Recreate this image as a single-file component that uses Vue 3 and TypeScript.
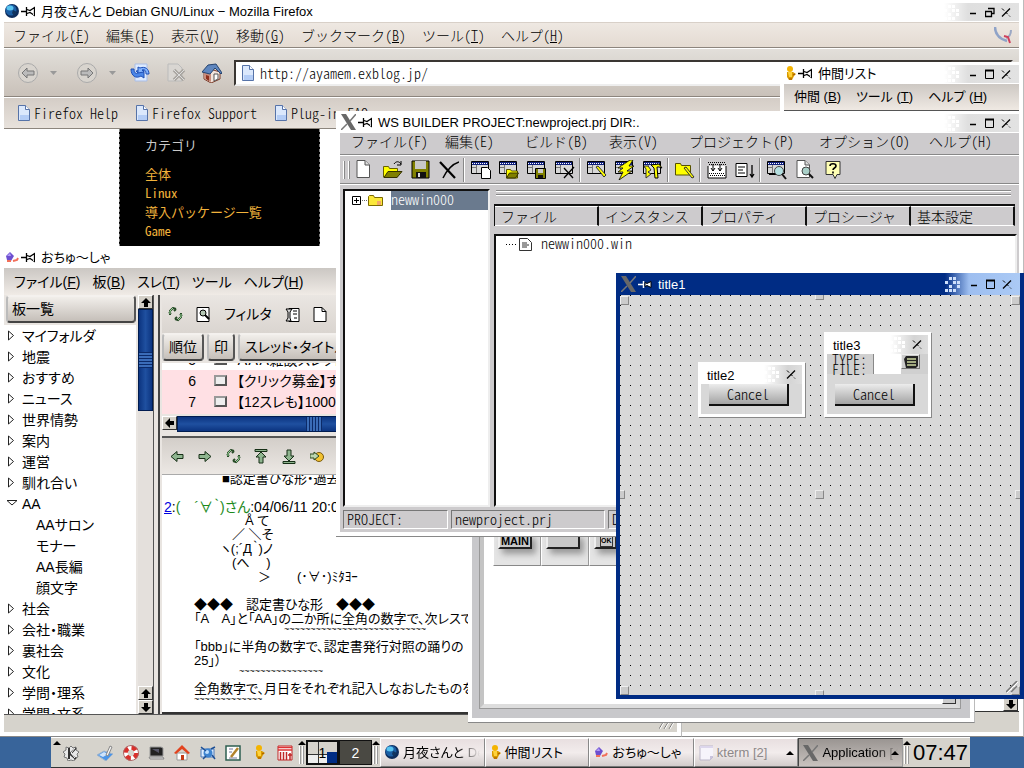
<script setup lang="ts">
import { h, ref } from 'vue'
import type { FunctionalComponent } from 'vue'

const doc = '<path d="M2 .5h8l4.500 4.500V17.500H2z" fill="#fff" stroke="#555"/><path d="M10 .5v4.500h4.500" fill="#ddd" stroke="#555"/>'
const frame = '<path d="M.5 1.500h17v12H.5z" fill="#d8d8d8" stroke="#000"/><path d="M1 2h16v3H1z" fill="#10207c"/><path d="M1 3.500h16" stroke="#fff" stroke-dasharray="1 1"/><path d="M5.500 5v8M1 7.500h4" stroke="#777"/>'
const folder = '<path d="M7.500 18V9.500h4l1 1.500h6v7z" fill="#ff0" stroke="#555000"/><path d="M7.500 18l3-5h9l-3 5z" fill="#808000" stroke="#333000"/>'
const cyc = '<path d="M2 8V4l3-3 3 1M3 7l-2-2M8 2L6 4M13 6v4l-3 3-3-1M12 7l2 2M7 12l2-2" fill="none" stroke="#264a26" stroke-width="2"/><path d="M2 7V4l3-3M13 7v3l-3 3" fill="none" stroke="#9bd49b"/>'

const icons: Record<string, string> = {
  globe: '<circle cx="7" cy="7" r="7" fill="#0d2c5c"/><circle cx="6" cy="6" r="5.500" fill="#1b5fa5"/><ellipse cx="5" cy="4" rx="3.500" ry="2.500" fill="#59c4f0"/><path d="M8 6l4 2-3 4-2-3z" fill="#10345f"/>',
  pin: '<path d="M0 5.500h5M5.500 1v9M6 3.500l3 1 4.500-3v8l-4.500-3-3 1" fill="none" stroke="currentColor" stroke-width="1.300"/>',
  pinned: '<path d="M0 5.500h5M5.500 2v7" stroke="#fff" stroke-width="1.500"/><path d="M7 3.500l2 1 4-2v6l-4-2-2 1z" fill="#fff" stroke="#000"/>',
  xlogo: '<path d="M0 0h5l10 16h-5z" fill="#686868"/><path d="M15 0L9 7M6 10L0 16" stroke="#777" stroke-width="1.500"/>',
  person: '<path d="M2 6h6l3 2-2 2-2 4H4L2 11z" fill="#d89a00"/><circle cx="5" cy="3" r="3" fill="#f4b400"/><path d="M3 6h4v5H4z" fill="#ffd23c"/><path d="M8 9l2-1M7 13H4" stroke="#a35100"/>',
  bug: '<path d="M1 6l4-4 4 4-3 5-4-1z" fill="#6d4fd0"/><path d="M2 6l3-3 1 3z" fill="#b09cf8"/><path d="M8 11l4-1 1-2M2 11h4" stroke="#f26f5a" stroke-width="2" fill="none"/>',
  back: '<circle cx="10" cy="10" r="9.500" fill="#d8d4ce" stroke="#aaa"/><path d="M4 10l5-5v3h7v4H9v3z" fill="#bbb" stroke="#777"/>',
  fwd: '<circle cx="10" cy="10" r="9.500" fill="#d8d4ce" stroke="#aaa"/><path d="M16 10l-5-5v3H4v4h7v3z" fill="#bbb" stroke="#777"/>',
  drop: '<path d="M0 0h7L3.500 4z" fill="#999"/>',
  reload: '<path d="M5 1h12v17H5z" fill="#dceaff" stroke="#a9bde6"/><path d="M1 6h3c0 4 2 5 4 4L6 8l8-1v8l-3-2c-5 3-10 0-10-7z" fill="#4a86e8" stroke="#1f4fb5"/><path d="M19 11h-3c0-3-1-5-4-4l2 2-6 1V4l2 1c5-2 9 1 9 6z" fill="#82b4ff" stroke="#1f4fb5"/>',
  stop: '<path d="M2 1h10l4 4v13H2z" fill="#d9d6d2" stroke="#bbb"/><path d="M8 7l10 10M18 7L8 17" stroke="#a9a5a0" stroke-width="3.500"/><path d="M8 7l10 10M18 7L8 17" stroke="#ddd"/>',
  home: '<path d="M2 8l6-2 10 3v7l-9 4-7-4z" fill="#f2e4dc" stroke="#7a3a28"/><path d="M2 9l7 2v8l-7-4z" fill="#c98d7c"/><path d="M0 9L6 2l8-1 6 9-1 1-6-6-5 6z" fill="#5f86be" stroke="#26446f"/><path d="M4 12l3 1v5l-3-2z" fill="#8e2f1c"/><path d="M12 11h4v5l-4 2z" fill="#fff" stroke="#555"/>',
  page: '<path d="M.5.500h7l4 4v11H.5z" fill="#dbe8fc" stroke="#5673a8"/><path d="M7.500.500v4h4" fill="#fff" stroke="#5673a8"/><path d="M2 10h9v5H2z" fill="#b4cdf6"/>',
  throbber: '<path d="M1 0c0 8 5 12 12 14" fill="none" stroke="#8fa3c8" stroke-width="2.500"/><path d="M17 3c0 4-2 7-5 8" fill="none" stroke="#9ca8c4" stroke-width="2"/><path d="M10 9l4 1 2 6" fill="none" stroke="#d0405c" stroke-width="2"/>',
  new: doc,
  open: '<path d="M.5 17V6.500h5l1 2h8v8.500z" fill="#ff0" stroke="#666000"/><path d="M1 17.500l4-6h14l-5 6z" fill="#808000" stroke="#333000"/><path d="M11 4c2-3 5-3 7 0M18 1v4h-4" fill="none" stroke="#000"/>',
  save: '<path d="M1 1h17v17H1z" fill="#808000" stroke="#000"/><path d="M4 1h11v8H4z" fill="#c8c8c8"/><path d="M5 12h10v6H5z" fill="#111"/><path d="M7 13h2v4H7z" fill="#ddd"/>',
  cut: '<path d="M1 2l15 16" stroke="#000" stroke-width="2.200"/><path d="M20 2c-6 2-12 8-16 16" stroke="#000" stroke-width="1.500" fill="none"/>',
  wnew: frame + '<path d="M10.500 7.500h6l3 3v8h-9z" fill="#fff" stroke="#000"/>',
  wopen: frame + folder,
  wsave: frame + '<path d="M8.500 8.500h10v10h-10z" fill="#808000" stroke="#000"/><path d="M11 9h5v4h-5z" fill="#ccc"/><path d="M11 15h5v3h-5z" fill="#111"/>',
  wcut: frame + '<path d="M9 8l9 10M19 7L9 18" stroke="#000" stroke-width="1.300"/>',
  wpen: frame + '<path d="M9 7l2-1 8 9-2 2z" fill="#ff0" stroke="#333"/>',
  wbolt: frame + '<path d="M15 0L3 8h5l-5 4h5l-4 8 13-9h-5l7-5h-5l4-6z" fill="#ff0" stroke="#000" stroke-width=".8"/>',
  whammer: frame + '<path d="M1 6h4l3 4-3 2 3 2-5 4V9z" fill="#ff0" stroke="#333"/><path d="M8 5l8-1 3 4-3-1h-2l1 11h-3l-1-10z" fill="#ff0" stroke="#000"/>',
  fpen: '<path d="M.5 15V3.500h5l1 2h9v9.500z" fill="#ff0" stroke="#555000"/><path d="M9 8l2-1 8 10-2 1z" fill="#ff0" stroke="#333"/>',
  grid: '<path d="M1 2.500h18M2 4.500h17" stroke="#000" stroke-dasharray="1 1"/><path d="M1 6v12h18V6" fill="#fff" stroke="#000"/><path d="M2 13.500h16M3 15.500h15" stroke="#000" stroke-dasharray="1 1"/><path d="M6 4v7M4 8l2 3 2-3M13 4v7M11 8l2 3 2-3" stroke="#000" fill="none"/>',
  list: '<path d="M1 3.500h11v13H1z" fill="#fff" stroke="#000"/><path d="M3 7h7M3 10h5M3 13h7" stroke="#000"/><path d="M17 5v12M15 14l2 3 2-3" stroke="#000" fill="none" stroke-width="1.300"/>',
  wfind: frame + '<path d="M2 14.500h9" stroke="#000"/><circle cx="12" cy="11" r="4.500" fill="#b4dfe0" stroke="#444"/><path d="M15 14l4 5" stroke="#111" stroke-width="2"/>',
  pfind: doc + '<circle cx="11" cy="11" r="4" fill="#a9cfc8" stroke="#444"/><path d="M14 14l4 4" stroke="#111" stroke-width="2"/>',
  help: '<path d="M3 1.500h14v13h-3l-2 4-2-4H3z" fill="#ffffb4" stroke="#333"/><path d="M7 6c0-3 6-3 6 0 0 2-3 2-3 4M10 11.500v2" fill="none" stroke="#000" stroke-width="1.600"/>',
  plus: '<path d="M.5 1.500h8v8h-8z" fill="#fff" stroke="#000"/><path d="M2 5.500h5M4.500 3v5" stroke="#000"/><path d="M10 5.500h5" stroke="#666" stroke-dasharray="1 1"/>',
  fold: '<path d="M.5 11.500v-9l1-1h4l1 2h8v8z" fill="#fbe83a" stroke="#7c6a00"/><path d="M9 7h4v4H9z" fill="#f3a76a"/>',
  file: '<path d="M0 6.500h10" stroke="#000" stroke-dasharray="1 2"/><path d="M13.500.500h8l4 4v8h-12z" fill="#fff" stroke="#333"/><path d="M16 5h5M16 7h7M16 9h5" stroke="#333"/>',
  cyc,
  search: '<path d="M1 .5h12v14H1z" fill="#fff" stroke="#000"/><circle cx="7" cy="6" r="3" fill="#b5c8b5" stroke="#000"/><path d="M9 8l4 4" stroke="#000" stroke-width="2"/>',
  tool: '<path d="M4 1.500h10v13H4z" fill="#fff" stroke="#000"/><path d="M1 2l2 3v6l-2 3h5l-1-3V5l2-3zM8 4h4M8 7h4M9 11h3" fill="#ddd" stroke="#000"/>',
  blank: '<path d="M1 .5h8l4 4v10H1z" fill="#fff" stroke="#000"/><path d="M9 .5v4h4" fill="none" stroke="#000"/>',
  left: '<path d="M1 7.500l6-5v3h6v4H7v3z" fill="#8fb58f" stroke="#162f16"/>',
  right: '<path d="M13 7.500l-6-5v3H1v4h6v3z" fill="#8fb58f" stroke="#162f16"/>',
  top: '<path d="M1 .5h12v2H1z" fill="#8fb58f" stroke="#162f16"/><path d="M7 3l5 5H9v6H5V8H2z" fill="#8fb58f" stroke="#162f16"/>',
  bottom: '<path d="M1 12.500h12v2H1z" fill="#8fb58f" stroke="#162f16"/><path d="M7 12L2 7h3V1h4v6h3z" fill="#8fb58f" stroke="#162f16"/>',
  moon: '<circle cx="9" cy="8" r="4.500" fill="#f2c230" stroke="#7a5a10"/><path d="M0 5h4V3l5 4-5 4V9H0z" fill="#bcd6b0" stroke="#2c4a20"/>',
  closed: '<path d="M1.500 1v9l5-4.500z" fill="#fff" stroke="#222"/>',
  opened: '<path d="M0 2.500h10L5 7z" fill="#fff" stroke="#222"/>',
  up: '<path d="M5 0l5 5H7v4H3V5H0z" fill="#000"/>',
  down: '<path d="M5 9l5-5H7V0H3v4H0z" fill="#000"/>',
  lft: '<path d="M0 5l5-5v3h4v4H5v3z" fill="#000"/>',
  tri: '<path d="M0 4l4-4 4 4z" fill="#000"/>',
  kde: '<path d="M8 1l2 2 3-1v3l3 2-2 2 1 3-3 1-1 3-3-1-3 1-1-3-3-1 1-3-2-2 3-2 0-3 3 1z" fill="#e9e9e9" stroke="#777"/><path d="M6 3v11M13 3L7 9l6 5" stroke="#333" stroke-width="2" fill="none"/><path d="M12 3L8 8l4 5" stroke="#fff" fill="none"/>',
  desk: '<path d="M0 10l7-4 9 3-7 7z" fill="#4b95e8" stroke="#9fb4cc"/><path d="M2 10l5-3 4 2-5 3z" fill="#cfe4fb"/><path d="M9 10l4-9 2 1-4 9z" fill="#f4f4f4" stroke="#888"/>',
  ring: '<circle cx="8" cy="8" r="5.500" fill="none" stroke="#fff" stroke-width="4.500"/><circle cx="8" cy="8" r="5.500" fill="none" stroke="#d9302c" stroke-width="4.500" stroke-dasharray="5 3.600"/><circle cx="8" cy="8" r="7.500" fill="none" stroke="#a66"/>',
  term: '<path d="M2 2h11l2 1v8H2z" fill="#222" stroke="#999"/><path d="M1 12h14l1 2H2z" fill="#ddd" stroke="#888"/><path d="M4 4h7v4z" fill="#556"/>',
  house: '<path d="M3 8h10v7H3z" fill="#fff" stroke="#999"/><path d="M0 8l8-8 8 8-2 1-6-5-6 5z" fill="#e2431e"/><path d="M7 10h3v5H7z" fill="#c43a16"/>',
  mail: '<path d="M1 4h13v8H1z" fill="#dcecff" stroke="#4b79b8"/><circle cx="8" cy="8" r="4.500" fill="#3d83cf"/><circle cx="7" cy="7" r="2" fill="#bfe0ff"/><path d="M1 2l5 4M11 4l4-2M12 10l3 4M3 14l3-3" stroke="#1d4f95" fill="none" stroke-width="1.500"/>',
  note: '<path d="M1 1h14v14H1z" fill="#fff" stroke="#2e5f50" stroke-width="1.500"/><path d="M4 4h4M4 7h3M4 13h8" stroke="#779"/><path d="M6 12L13 3" stroke="#b3832b" stroke-width="2.500"/>',
  cal: '<path d="M1 1h14v14H1z" fill="#fff" stroke="#c02626"/><path d="M1 2.500h14M1 5h14" stroke="#d33" stroke-width="1.500"/><path d="M3.500 7v8M6.500 7v8M9.500 7v8M11 10h4M13 8v7" stroke="#c02626" stroke-width="1.500"/>',
  sheet: '<path d="M1 1h14v10l-4 4H1z" fill="#f6f4fb" stroke="#bbb6c8"/><path d="M11 15v-4h4" fill="#c9c3dc"/><path d="M1 1h14v2H1z" fill="#dcd6ec"/>',
  dither: '<path d="M4 0h3v3H4zM8 0h3v3H8zM0 4h3v3H0zM8 4h3v3H8zM12 4h3v3h-3zM4 8h3v3H4zM12 8h3v3h-3zM0 12h3v3H0zM4 12h3v3H4zM8 12h3v3H8z" fill="currentColor"/>',
  min: '<path d="M1 6.500h6" stroke="#000" stroke-width="1.500"/>',
  max: '<path d="M.5 1.500h8v8h-8z" fill="none" stroke="#000"/><path d="M0 1.500h9" stroke="#000" stroke-width="2"/>',
  restore: '<path d="M3 1.500h6v5H7M.5 4.500h6v5h-6z" fill="none" stroke="#000" stroke-width="1.300"/>',
  close: '<path d="M1 1.500l8 8" stroke="#000" stroke-dasharray="3 2"/><path d="M9 1.500l-8 8" stroke="#000" stroke-width="1.300"/>',
  grip: '<path d="M0 11L6 1M5 11l6-10M10 11l6-10" stroke="#777"/><path d="M1 11L7 1M6 11l6-10M11 11l6-10" stroke="#fff"/>',
  corner: '<path d="M0 11L11 0M5 11l6-6" stroke="#777" stroke-width="1.500"/><path d="M1 12L12 1" stroke="#fff"/>',
  menu: '<path d="M2 4l2-3h12v10l-2 2H4z" fill="#222"/><path d="M5 4h9M5 7h9M5 10h9" stroke="#cdd8a0" stroke-width="1.500"/>',
}

const Ico: FunctionalComponent<{ name: string; w?: number; t?: number }> = (p) =>
  h('svg', {
    width: p.w ?? 16,
    height: p.t ?? 16,
    viewBox: `0 0 ${p.w ?? 16} ${p.t ?? 16}`,
    'aria-hidden': 'true',
    innerHTML: icons[p.name],
  })
Ico.props = ['name', 'w', 't']

interface BarProps {
  title: string
  icon?: string
  size?: string
  active?: boolean
  small?: boolean
}
const TitleBar: FunctionalComponent<BarProps> = (p) =>
  h('header', { class: ['tb', { 'tb-active': p.active, 'tb-small': p.small }] }, [
    p.icon ? h(Ico, { name: p.icon, w: p.icon === 'person' ? 11 : p.icon === 'xlogo' ? 15 : 14, t: p.icon === 'xlogo' ? 16 : 14 }) : null,
    p.small ? null : h(Ico, { name: p.active ? 'pinned' : 'pin', w: 14, t: 11 }),
    h('span', { class: 'tb-text' }, p.title),
    h('div', { class: 'tb-ctl' }, [
      h(Ico, { name: 'dither', w: 15, t: 15 }),
      ...(p.small ? ['close'] : ['min', p.size ?? 'max', 'close']).map((n) =>
        h('button', { type: 'button', 'aria-label': n }, [h(Ico, { name: n, w: 10, t: 11 })]),
      ),
    ]),
  ])
TitleBar.props = { title: String, icon: String, size: String, active: Boolean, small: Boolean } as never

const url = ref('http://ayamem.exblog.jp/')
const typeValue = ref('')

const ffMenu = [['ファイル', 'F'], ['編集', 'E'], ['表示', 'V'], ['移動', 'G'], ['ブックマーク', 'B'], ['ツール', 'T'], ['ヘルプ', 'H']]
const bookmarks = ['Firefox Help', 'Firefox Support', 'Plug-in FAQ']
const categories = ['全体', 'Linux', '導入パッケージ一覧', 'Game']
const buddyMenu = [['仲間 ', 'B'], ['ツール ', 'T'], ['ヘルプ ', 'H']]
const boardMenu = [['ファイル', 'F'], ['板', 'B'], ['スレ', 'T'], ['ツール', ''], ['ヘルプ', 'H']]
const boards: { name: string; kind: 'closed' | 'opened' | 'leaf' }[] = [
  ...['マイフォルダ', '地震', 'おすすめ', 'ニュース', '世界情勢', '案内', '運営', '馴れ合い'].map((name) => ({ name, kind: 'closed' as const })),
  { name: 'AA', kind: 'opened' },
  ...['AAサロン', 'モナー', 'AA長編', '顔文字'].map((name) => ({ name, kind: 'leaf' as const })),
  ...['社会', '会社・職業', '裏社会', '文化', '学問・理系', '学問・文系'].map((name) => ({ name, kind: 'closed' as const })),
]
const threads = [
  { no: 5, title: 'ＡＡＡ雑談スレッド' },
  { no: 6, title: '【クリック募金】す' },
  { no: 7, title: '【12スレも】1000ま' },
]
const art = [
  { pad: 51, text: 'Å て' },
  { pad: 38, text: '／ ＼そ' },
  { pad: 27, text: 'ヽ(;´Д｀)ノ' },
  { pad: 38, text: '(へ　 )' },
  { pad: 64, text: '＞　　(･∀･)ﾐﾀﾖｰ' },
  { pad: 0, text: '' },
  { pad: 0, text: '◆◆◆　認定書ひな形　◆◆◆' },
  { pad: 0, text: '「A　A」と「AA」の二か所に全角の数字で、次レスで' },
  { pad: 90, wave: 27 },
  { pad: 0, text: '「bbb」に半角の数字で、認定書発行対照の踊りの' },
  { pad: 0, text: '25」）' },
  { pad: 45, wave: 16 },
  { pad: 0, text: '全角数字で、月日をそれぞれ記入しなおしたものを' },
  { pad: 0, wave: 13 },
]
const wsMenu = ['ファイル(F)', '編集(E)', 'ビルド(B)', '表示(V)', 'プロジェクト(P)', 'オプション(O)', 'ヘルプ(H)']
const wsTools = [
  ['new', 'open', 'save', 'cut'],
  ['wnew', 'wopen', 'wsave', 'wcut'],
  ['wpen', 'wbolt', 'whammer'],
  ['fpen'],
  ['grid', 'list'],
  ['wfind', 'pfind', 'help'],
]
const wsTabs = ['ファイル', 'インスタンス', 'プロパティ', 'プロシージャ', '基本設定']
const handles = ['tl', 'tc', 'tr', 'ml', 'mc', 'mr', 'bl', 'bc', 'br']
const launchers = ['kde', 'desk', 'ring', 'term', 'house', 'mail', 'note', 'person', 'cal']
const tasks = [
  { icon: 'globe', label: '月夜さんと Debian', cls: 'fade' },
  { icon: 'person', label: '仲間リスト', cls: '' },
  { icon: 'bug', label: 'おちゅ～しゃ', cls: '' },
  { icon: 'sheet', label: 'kterm [2]', cls: 'dim more' },
  { icon: 'xlogo', label: 'Application [4]', cls: 'on more fade' },
]
</script>

<template>
  <div class="desktop">
    <main class="workspace">
      <section class="win firefox">
        <TitleBar title="月夜さんと Debian GNU/Linux − Mozilla Firefox" icon="globe" size="restore" />
        <nav class="ff-menu hw">
          <button v-for="m in ffMenu" :key="m[0]" type="button">{{ m[0] }}(<u>{{ m[1] }}</u>)</button>
          <Ico class="throb" name="throbber" :w="19" :t="17" />
        </nav>
        <div class="ff-bar">
          <button type="button" aria-label="戻る"><Ico name="back" :w="20" :t="20" /></button>
          <button type="button" class="dd" aria-label="履歴"><Ico name="drop" :w="7" :t="4" /></button>
          <button type="button" aria-label="進む"><Ico name="fwd" :w="20" :t="20" /></button>
          <button type="button" class="dd" aria-label="進む履歴"><Ico name="drop" :w="7" :t="4" /></button>
          <button type="button" class="wide" aria-label="更新"><Ico name="reload" :w="20" :t="20" /></button>
          <button type="button" class="wide" aria-label="中止"><Ico name="stop" :w="20" :t="20" /></button>
          <button type="button" class="wide" aria-label="ホーム"><Ico name="home" :w="20" :t="20" /></button>
          <div class="url">
            <Ico name="page" :w="12" :t="16" />
            <input v-model="url" class="hw" type="text" aria-label="アドレス" />
          </div>
        </div>
        <nav class="ff-marks hw">
          <a v-for="b in bookmarks" :key="b" href="#"><Ico name="page" :w="12" :t="16" />{{ b }}</a>
        </nav>
        <div class="ff-page">
          <aside class="blog">
            <h2>カテゴリ</h2>
            <a v-for="c in categories" :key="c" href="#">{{ c }}</a>
          </aside>
          <div class="ff-scroll"><button type="button" aria-label="下へ"><Ico name="down" :w="10" :t="9" /></button></div>
        </div>
        <div class="ff-status"></div>
      </section>

      <section class="win buddy">
        <TitleBar title="仲間リスト" icon="person" />
        <nav class="buddy-menu">
          <button v-for="m in buddyMenu" :key="m[0]" type="button">{{ m[0] }}(<u>{{ m[1] }}</u>)</button>
        </nav>
      </section>

      <section class="win board">
        <TitleBar title="おちゅ～しゃ" icon="bug" />
        <nav class="board-menu">
          <button v-for="m in boardMenu" :key="m[0]" type="button">{{ m[0] }}<template v-if="m[1]">(<u>{{ m[1] }}</u>)</template></button>
        </nav>
        <div class="board-body">
          <div class="side">
            <button type="button" class="colhead">板一覧</button>
            <ul class="tree">
              <li v-for="b in boards" :key="b.name" :class="b.kind">
                <Ico v-if="b.kind !== 'leaf'" :name="b.kind" :w="10" :t="11" />{{ b.name }}
              </li>
            </ul>
          </div>
          <div class="vscroll">
            <button type="button" aria-label="上へ"><Ico name="up" :w="10" :t="9" /></button>
            <div class="thumb"></div>
            <div class="track"></div>
            <button type="button" aria-label="一つ上へ"><Ico name="up" :w="10" :t="9" /></button>
            <button type="button" aria-label="下へ"><Ico name="down" :w="10" :t="9" /></button>
          </div>
          <div class="split"></div>
          <div class="threads">
            <div class="tool top">
              <button type="button" aria-label="更新"><Ico name="cyc" :w="15" :t="15" /></button>
              <button type="button" aria-label="検索"><Ico name="search" :w="15" :t="15" /></button>
              <button type="button" class="txt">フィルタ</button>
              <button type="button" aria-label="設定"><Ico name="tool" :w="15" :t="15" /></button>
              <button type="button" aria-label="新規"><Ico name="blank" :w="15" :t="15" /></button>
            </div>
            <div class="heads">
              <button type="button" class="colhead">順位</button>
              <button type="button" class="colhead">印</button>
              <button type="button" class="colhead grow">スレッド・タイトル</button>
            </div>
            <div class="rows">
              <label v-for="t in threads" :key="t.no" class="row">
                <span class="no">{{ t.no }}</span><input type="checkbox" />{{ t.title }}
              </label>
            </div>
            <div class="hscroll">
              <button type="button" aria-label="左へ"><Ico name="lft" :w="10" :t="10" /></button>
              <div class="hthumb"></div>
            </div>
            <div class="hsplit"></div>
            <div class="tool low">
              <button v-for="n in ['left', 'right', 'cyc', 'top', 'bottom', 'moon']" :key="n" type="button" :aria-label="n">
                <Ico :name="n" :w="15" :t="15" />
              </button>
            </div>
            <article class="res">
              <p class="l first">■認定書ひな形・過去ログ</p>
              <p class="l"></p>
              <p class="l hdr"><a href="#">2</a>:<span class="name">(　´∀｀)さん</span>:04/06/11 20:07</p>
              <template v-for="(a, i) in art" :key="i">
                <p v-if="a.wave" class="l wave" :style="{ paddingLeft: a.pad + 'px' }">{{ '~'.repeat(a.wave) }}</p>
                <p v-else class="l" :style="{ paddingLeft: a.pad + 'px' }">{{ a.text }}</p>
              </template>
            </article>
          </div>
        </div>
        <footer class="board-status"><Ico name="grip" :w="18" :t="12" /></footer>
      </section>

      <section class="win palette">
        <div class="pal-frame">
          <div class="pal-body">
            <div class="cells">
              <div class="cell"><button type="button">MAIN</button></div>
              <div class="cell"><button type="button" aria-label="空"></button></div>
              <div class="cell"><button type="button" class="mini"><span>OK</span><span>NO</span></button></div>
            </div>
            <div class="pal-knob"></div>
          </div>
        </div>
      </section>

      <section class="win builder">
        <TitleBar title="WS BUILDER PROJECT:newproject.prj DIR:." icon="xlogo" />
        <nav class="ws-menu hw">
          <button v-for="m in wsMenu" :key="m" type="button">{{ m }}</button>
        </nav>
        <div class="ws-tools">
          <span class="grips"></span>
          <div v-for="(g, i) in wsTools" :key="i" class="grp">
            <button v-for="n in g" :key="n" type="button" :aria-label="n"><Ico :name="n" :w="20" :t="20" /></button>
          </div>
        </div>
        <div class="ws-main">
          <div class="ws-tree hw">
            <div class="node"><Ico name="plus" :w="15" :t="11" /><Ico name="fold" :w="16" :t="13" /><span>newwin000</span></div>
          </div>
          <div class="ws-right">
            <div class="lines"></div>
            <div class="tabs hw">
              <button v-for="t in wsTabs" :key="t" type="button">{{ t }}</button>
            </div>
            <div class="files hw"><Ico name="file" :w="27" :t="13" />newwin000.win</div>
          </div>
        </div>
        <footer class="ws-status hw"><span>PROJECT:</span><span>newproject.prj</span><span>DIR:</span></footer>
      </section>

      <section class="win form">
        <TitleBar title="title1" icon="xlogo" active />
        <div class="canvas">
          <svg class="dots" width="100%" height="100%" aria-hidden="true">
            <defs><pattern id="dot" width="10" height="10" patternUnits="userSpaceOnUse"><rect width="1" height="1" fill="#000" /></pattern></defs>
            <rect width="100%" height="100%" fill="url(#dot)" />
          </svg>
          <i v-for="k in handles" :key="k" class="handle" :class="k"></i>
          <Ico class="corner" name="corner" :w="12" :t="12" />
          <div class="dlg two">
            <TitleBar title="title2" small />
            <button type="button" class="cancel hw">Cancel</button>
          </div>
          <div class="dlg three">
            <TitleBar title="title3" small />
            <div class="fields hw">
              <label for="ft"><span>TYPE:</span><span>FILE:</span></label>
              <input id="ft" v-model="typeValue" type="text" />
              <button type="button" aria-label="選択"><Ico name="menu" :w="17" :t="14" /></button>
            </div>
            <button type="button" class="cancel hw">Cancel</button>
          </div>
        </div>
      </section>
    </main>

    <footer class="taskbar">
      <div class="panel">
        <Ico class="mark" name="tri" :w="8" :t="4" />
        <div class="launch">
          <button v-for="l in launchers" :key="l" type="button" :aria-label="l"><Ico :name="l" :w="l === 'person' ? 11 : 17" :t="16" /></button>
        </div>
        <div class="applet"><Ico name="tri" :w="8" :t="4" /></div>
        <button type="button" class="desk one">1</button>
        <button type="button" class="desk dark">2</button>
        <div class="applet"><Ico name="tri" :w="8" :t="4" /></div>
        <div class="tasks">
          <button v-for="t in tasks" :key="t.label" type="button" :class="t.cls">
            <Ico :name="t.icon" :w="t.icon === 'person' ? 11 : t.icon === 'xlogo' ? 15 : 14" :t="16" /><span>{{ t.label }}</span>
            <Ico v-if="t.cls.includes('more')" class="more-mark" name="tri" :w="8" :t="4" />
          </button>
        </div>
        <div class="applet"><Ico name="tri" :w="8" :t="4" /></div>
        <time class="clock">07:47</time>
      </div>
    </footer>
  </div>
</template>

<style>
body { margin: 0; overflow: hidden; }
button { font: inherit; color: inherit; background: none; border: 0; padding: 0; margin: 0; line-height: inherit; white-space: nowrap; }
svg { display: block; flex: none; }
.tb { display: flex; align-items: center; height: 22px; flex: none; background: #fff; font-size: 13px; line-height: 20px; padding-left: 2px; margin: 0 -4px; }
.tb > svg { margin-right: 1px; margin-left: 3px; }
.tb > svg + svg { margin-right: 6px; margin-left: 1px; }
.tb-text { flex: 1; white-space: nowrap; padding-top: 2px; }
.tb-ctl { display: flex; align-items: center; gap: 6px; height: 18px; padding-right: 8px; margin: 2px 4px 0 0; background: linear-gradient(90deg, #fff, #dfdfdf 24px, #e2e2e2); color: #fff; }
.tb-ctl > svg { margin-right: 4px; }
.tb-ctl button { width: 10px; height: 11px; }
.tb-active { background: #002c84; color: #fff; }
.tb-active .tb-ctl { background: linear-gradient(90deg, #002c84, #9dbef0 24px, #abcaf5); height: 22px; margin: 0 4px 0 0; color: #cfe0fb; }
.tb-small { margin: 0; height: 19px; padding-left: 6px; }
.tb-small .tb-ctl { margin: 0; height: 19px; gap: 3px; padding-right: 6px; background: linear-gradient(90deg, #fff, #d4d4d4 24px, #dedede); }
</style>

<style scoped>
.desktop { height: 100vh; display: flex; flex-direction: column; background: #38649a; color: #000; font-family: "Liberation Sans", "Noto Sans CJK JP", sans-serif; font-size: 14px; line-height: 18px; font-feature-settings: "palt"; overflow: hidden; }
.hw { font-family: "Noto Sans CJK JP", sans-serif; font-size: 14px; font-weight: 300; font-feature-settings: "hwid"; }
.workspace { flex: 1; position: relative; min-height: 0; }
.win { position: absolute; box-sizing: border-box; display: flex; flex-direction: column; background: #fff; padding: 0 4px 4px; border-right: 1px solid #bbb; overflow: hidden; }
.firefox { inset: 0; border-bottom: 1px solid #888; }
.board { left: 0; top: 246px; width: 682px; bottom: 0; border-bottom: 1px solid #888; }
.buddy { left: 780px; top: 62px; right: 0; padding-bottom: 1px; }
.palette { left: 468px; top: 400px; width: 507px; bottom: 14px; padding: 4px; border-bottom: 1px solid #888; }
.builder { left: 336px; top: 111px; right: 0; bottom: 200px; border-bottom: 1px solid #888; }
.form { left: 616px; top: 273px; right: 0; bottom: 38px; background: #002c84; border: 0; }

.ff-menu { display: flex; align-items: center; gap: 16px; height: 26px; padding: 0 6px 0 9px; background: linear-gradient(#eee8e2, #e4dbd2); border-bottom: 1px solid #8c857d; border-top: 1px solid #d8d0c8; box-sizing: border-box; line-height: 20px; }
.throb { margin-left: auto; }
.ff-bar { display: flex; align-items: center; height: 49px; box-sizing: border-box; padding-left: 14px; background: linear-gradient(#e2dfda, #c9c1b9); border-top: 1px solid #fff; border-bottom: 1px solid #8c857d; }
.dd { width: 39px; display: flex; padding-left: 12px; box-sizing: border-box; }
.ff-bar .dd + .wide { margin-left: -6px; }
.wide { width: 36px; display: flex; }
.url { flex: 1; display: flex; align-items: center; gap: 6px; height: 26px; box-sizing: border-box; margin: 0 6px 0 -4px; padding-left: 6px; background: #fff; border: 2px solid #3a3632; border-right-color: #ddd; border-bottom-color: #eee; }
.url input { flex: 1; border: 0; outline: 0; padding: 0; background: none; height: 20px; }
.ff-marks { display: flex; align-items: center; gap: 18px; height: 32px; box-sizing: border-box; padding-left: 14px; background: linear-gradient(#d4cdc6, #e8e2dc); border-top: 1px solid #fff; border-bottom: 1px solid #8c857d; }
.ff-marks a { display: flex; align-items: center; gap: 4px; color: #000; text-decoration: none; line-height: 18px; }
.ff-page { flex: 1; display: flex; padding-left: 115px; min-height: 0; }
.blog { width: 201px; box-sizing: border-box; padding: 6px 0 0 25px; background: #000; color: #f2b33c; border-left: 1px dashed #888; border-right: 1px dashed #888; font-family: "Noto Sans CJK JP", sans-serif; font-size: 13px; font-feature-settings: "hwid"; }
.blog h2 { margin: 0 0 9px; font-size: 13px; font-weight: 400; line-height: 20px; color: #c9c9c9; }
.blog a { display: block; color: inherit; text-decoration: none; line-height: 19px; height: 19px; }
.ff-scroll { margin-left: auto; width: 16px; display: flex; flex-direction: column; justify-content: flex-end; background: #fff; }
.ff-scroll button, .vscroll button, .hscroll button { display: flex; align-items: center; justify-content: center; background: #d4d0c8; border: 1px solid; border-color: #fff #333 #333 #fff; box-sizing: border-box; width: 15px; height: 14px; }
.ff-status { height: 21px; background: #d6d3cc; border-top: 1px solid #333; box-sizing: border-box; flex: none; }

.buddy-menu { display: flex; align-items: center; gap: 15px; height: 26px; padding-left: 10px; background: linear-gradient(#cdc8c3, #efe9e3); border-bottom: 1px solid #555; white-space: pre; font-size: 13px; }

.board-menu { display: flex; align-items: center; gap: 12px; height: 27px; padding: 0 10px; background: linear-gradient(#cbc7c3, #f0ebe6); flex: none; }
.board-body { flex: 1; display: flex; min-height: 0; background: #e9e5e1; }
.side { width: 132px; display: flex; flex-direction: column; min-height: 0; padding-left: 2px; box-sizing: border-box; }
.colhead { height: 28px; box-sizing: border-box; padding: 0 4px; text-align: left; background: linear-gradient(#f1eeea, #c5bfb9); border: 2px solid; border-color: #f4f1ee #555 #444 #bbb; border-radius: 4px; font-size: 14px; flex: none; }
.tree { flex: 1; margin: 2px 0 0 -2px; padding: 0 0 0 3px; list-style: none; background: #fff; overflow: hidden; }
.tree li { display: flex; align-items: center; gap: 5px; height: 21px; white-space: nowrap; }
.tree .leaf { padding-left: 29px; }
.vscroll { width: 16px; display: flex; flex-direction: column; margin-left: 2px; background: #e4e0dc; border-right: 1px solid #555; box-sizing: border-box; }
.vscroll button { flex: none; }
.thumb { height: 102px; background: repeating-linear-gradient(#0c2a68 0 1px, #3a6cb8 1px 3px) center 50% / 100% 16px no-repeat, linear-gradient(90deg, #0c3480, #1f50a0, #0c3480); border: 1px solid #001c50; box-sizing: border-box; flex: none; }
.track { flex: 1; }
.split { width: 6px; border-right: 2px solid #444; margin-right: 2px; box-sizing: border-box; }
.threads { flex: 1; display: flex; flex-direction: column; min-width: 0; border-bottom: 2px solid #333; }
.tool { display: flex; align-items: center; gap: 13px; flex: none; background: linear-gradient(#eae6e2, #dad5d0); padding-left: 6px; }
.top { height: 38px; }
.low { height: 37px; border-bottom: 1px solid #aaa; box-sizing: border-box; background: linear-gradient(#d3cec9, #ece8e4); padding-left: 8px; }
.heads { display: flex; gap: 3px; height: 30px; flex: none; }
.heads .colhead { padding: 0 5px; }
.heads .grow { flex: 1; }
.rows { height: 51px; display: flex; flex-direction: column; justify-content: flex-end; background: #fff; overflow: hidden; flex: none; border-bottom: 2px solid #ffe0e4; box-sizing: border-box; margin-bottom: 2px; }
.row { display: flex; align-items: center; height: 21px; flex: none; background: #ffe0e4; white-space: nowrap; }
.row:first-child { background: #fff; }
.no { width: 34px; text-align: right; margin-right: 18px; }
.row input { appearance: none; width: 13px; height: 11px; margin: 0 10px 0 0; border: 2px solid; border-color: #999 #555 #555 #999; background: #eee; }
.hscroll { display: flex; height: 16px; flex: none; }
.hthumb { flex: 1; background: repeating-linear-gradient(90deg, #0c2a68 0 1px, #3a6cb8 1px 3px) 128px 0 / 16px 100% no-repeat, linear-gradient(#0c3480, #1f50a0, #0c3480); border: 1px solid #001c50; }
.hsplit { height: 6px; border-bottom: 2px solid #555; box-sizing: border-box; flex: none; }
.res { flex: 1; background: #fff; overflow: hidden; padding-left: 32px; font-family: "Liberation Sans", "Noto Sans CJK JP", sans-serif; font-size: 13px; line-height: 14px; }
.l { margin: 0; height: 14px; white-space: pre; }
.first { margin-top: -3px; padding-left: 28px; }
.hdr { margin-left: -30px; font-size: 14px; }
.hdr a { color: #0000e0; }
.name { color: #1c8a1c; }
.wave { font-size: 9px; line-height: 6px; }
.board-status { height: 18px; box-sizing: border-box; display: flex; justify-content: flex-end; align-items: center; background: #d6d3cc; flex: none; border-top: 1px solid #555; }

.pal-frame { flex: 1; display: flex; background: #c8c8cb; padding: 6px 10px 10px 8px; }
.pal-body { flex: 1; position: relative; background: #fff; border: 4px solid; border-color: #bbb #d8d8d8 #ddd #c4c4c4; outline: 1px solid #999; }
.cells { display: flex; padding: 112px 0 0 9px; }
.cell { width: 48px; height: 40px; background: #e4e4e4; border: 1px solid; border-color: #fff #999 #888 #fff; box-sizing: border-box; padding: 6px 3px 0 4px; }
.cell button { display: block; width: 34px; height: 16px; background: #c8c8c8; border: 2px solid; border-color: #eee #222 #222 #eee; box-sizing: border-box; font-size: 11px; line-height: 12px; font-weight: 700; box-shadow: 4px 5px 6px #999; }
.cell .mini { display: flex; gap: 2px; font-size: 7px; line-height: 9px; padding: 0 0 0 4px; }
.mini span { border: 1px solid #333; }
.pal-knob { position: absolute; right: 0; bottom: 0; width: 14px; height: 14px; background: #ccc; border: 1px solid; border-color: #fff #333 #333 #fff; box-sizing: border-box; }

.ws-menu { display: grid; grid-template-columns: 94px 80px 84px 80px 130px 110px auto; justify-items: start; align-items: start; height: 21px; padding-left: 11px; background: #cdcbcd; border-bottom: 1px solid #888; flex: none; line-height: 17px; }
.ws-tools { display: flex; align-items: center; height: 27px; background: #cdcbcd; border-top: 1px solid #fff; border-bottom: 1px solid #888; padding-left: 3px; flex: none; }
.grips { width: 6px; height: 18px; border: solid #fff; border-width: 0 1px; box-shadow: 1px 0 #888, inset 1px 0 #888; box-sizing: border-box; margin-right: 2px; }
.grp { display: flex; }
.grp + .grp { border-left: 1px solid #888; box-shadow: inset 1px 0 #fff; padding-left: 3px; }
.grp button { width: 28px; height: 24px; display: flex; align-items: center; justify-content: center; }
.ws-main { flex: 1; display: flex; gap: 4px; background: #cdcbcd; padding: 4px 2px 2px 3px; border-top: 1px solid #fff; min-height: 0; }
.ws-tree { width: 147px; background: #fff; border: 2px solid; border-color: #111 #eee #eee #111; box-sizing: border-box; flex: none; }
.node { display: flex; align-items: center; padding-left: 7px; gap: 1px; height: 19px; }
.node span { flex: 1; margin-left: 6px; background: #6a7a8e; color: #fff; line-height: 17px; height: 19px; }
.ws-right { flex: 1; display: flex; flex-direction: column; min-width: 0; }
.lines { height: 5px; margin: 1px 6px 9px 2px; border: solid #888; border-width: 1px 0; box-shadow: 0 1px #fff, inset 0 1px #fff; box-sizing: border-box; flex: none; }
.tabs { display: flex; border-top: 2px solid #111; height: 22px; box-sizing: border-box; flex: none; border-left: 1px solid #111; margin-right: 2px; }
.tabs button { flex: 1; text-align: left; padding-left: 6px; border-right: 2px solid #111; border-bottom: 1px solid #fff; border-top: 1px solid #fff; line-height: 18px; }
.files { flex: 1; display: flex; align-items: flex-start; margin-top: 8px; padding: 0 0 0 10px; line-height: 15px; gap: 8px; background: #fff; border: 2px solid; border-color: #111 #eee #eee #111; }
.files svg { margin-top: 2px; }
.ws-status { display: flex; gap: 3px; height: 22px; padding: 1px 3px 0; background: #cdcbcd; flex: none; }
.ws-status span { width: 154px; height: 19px; box-sizing: border-box; border: 1px solid; border-color: #777 #fff #fff #777; padding-left: 3px; line-height: 17px; }
.ws-status span:first-child { width: 105px; }
.ws-status span:last-child { flex: 1; }

.canvas { flex: 1; position: relative; background: #d8d8d8; overflow: hidden; }
.dots { position: absolute; inset: 0; }
.handle { position: absolute; width: 9px; height: 9px; box-sizing: border-box; background: #ccc; border: 1px solid; border-color: #eee #888 #888 #eee; }
.tl { left: 0; top: 1px; } .tc { left: 195px; top: -4px; } .tr { right: 0; top: 1px; }
.ml { left: -4px; top: 195px; } .mc { left: 195px; top: 195px; } .mr { right: -4px; top: 195px; }
.bl { left: 0; bottom: 0; } .bc { left: 195px; bottom: -4px; } .br { right: 0; bottom: 0; }
.corner { position: absolute; right: 2px; bottom: 2px; }
.dlg { position: absolute; width: 107px; box-sizing: border-box; background: #d8d8d8; border: 3px solid #fff; box-shadow: 1px 1px #888; display: flex; flex-direction: column; }
.two { left: 78px; top: 67px; height: 55px; }
.three { left: 204px; top: 37px; height: 85px; }
.cancel { width: 80px; height: 22px; flex: none; margin-left: 8px; box-sizing: border-box; background: linear-gradient(#ececec, #a4a4a4); border: solid #111; border-width: 0 2px 2px 0; line-height: 18px; }
.three .cancel { margin-top: 10px; }
.fields { display: flex; height: 20px; flex: none; background: #d0d0d0; }
.fields label { display: flex; flex-direction: column; width: 41px; padding-left: 5px; line-height: 10px; }
.fields input { width: 28px; height: 20px; border: 0; padding: 0; background: #fff; border-left: 1px solid #888; box-sizing: border-box; }
.fields button { background: #ccc; height: 15px; border: 1px solid; border-color: #eee #777 #777 #eee; display: flex; width: 19px; box-sizing: border-box; }

.taskbar { height: 31px; flex: none; display: flex; padding: 0 54px 0 51px; }
.panel { flex: 1; display: flex; align-items: stretch; background: #d6d3cc; border-top: 1px solid #fff; border-bottom: 1px solid #333; min-width: 0; box-sizing: border-box; font-size: 13px; }
.mark { margin: 3px 0 0 2px; }
.launch { display: flex; align-items: center; width: 237px; flex: none; }
.launch button { width: 26px; display: flex; justify-content: center; }
.launch button:first-child { width: 30px; margin-right: 2px; padding-right: 8px; box-sizing: border-box; }
.applet { width: 8px; flex: none; padding-top: 3px; }
.applet::after { content: ""; display: block; height: 18px; margin: 1px 1px 0; background: repeating-linear-gradient(90deg, #fff 0 1px, #999 1px 2px, #d6d3cc 2px 3px); }
.desk { width: 33px; flex: none; margin: 2px 0 2px 0; border: 1px solid #111; background: #fff; font-size: 14px; }
.one { background: linear-gradient(#002c84, #002c84) right bottom / 10px 11px no-repeat, linear-gradient(90deg, transparent 10px, #333 10px 11px, transparent 11px), linear-gradient(transparent 12px, #333 12px 13px, #eee 13px); border-width: 2px; }
.dark { background: #4a4943; color: #fff; }
.tasks { flex: 1; display: flex; min-width: 0; }
.tasks button { flex: 1 1 0; min-width: 0; position: relative; display: flex; align-items: center; gap: 4px; padding: 0 4px; border: 1px solid; border-color: #fff #888 #777 #fff; background: linear-gradient(#e8dfe0, #f2ecec 50%, #d2cccb); overflow: hidden; box-sizing: border-box; }
.tasks .on { background: linear-gradient(#9a9592, #c8c2be); border-color: #444 #999 #999 #444; }
.tasks .dim { color: #8d8888; }
.tasks .fade span { flex: 1; min-width: 0; text-align: left; overflow: hidden; mask-image: linear-gradient(90deg, #000 70%, transparent); }
.more-mark { position: absolute; right: 3px; top: 12px; }
.clock { flex: none; width: 59px; text-align: center; font-size: 22px; line-height: 29px; }
</style>
